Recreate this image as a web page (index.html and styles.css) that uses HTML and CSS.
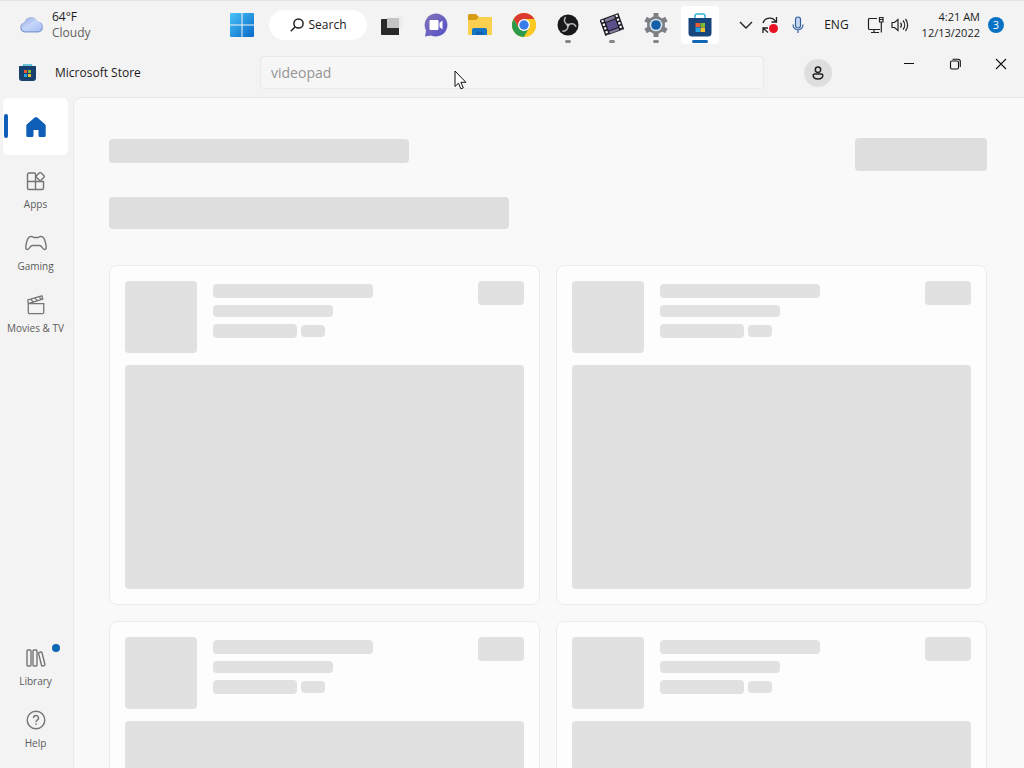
FILE: index.html
```html
<!DOCTYPE html>
<html lang="en">
<head>
<meta charset="utf-8">
<title>Microsoft Store</title>
<link rel="stylesheet" href="styles.css">
</head>
<body>
<header class="taskbar">
  <button class="weather">
    <svg width="26" height="18" viewBox="0 0 26 18"><defs><linearGradient id="cl" x1="0" y1="0" x2="1" y2="1"><stop offset="0" stop-color="#8ea6da"/><stop offset=".5" stop-color="#c6d6fa"/><stop offset="1" stop-color="#a5bcf0"/></linearGradient></defs><path d="M6 16.500a5 5 0 0 1-.6-9.900A7 7 0 0 1 18.600 5.800 5.400 5.400 0 0 1 19.500 16.500z" fill="#7f9ad2"/><path d="M6 15.300a4.600 4.600 0 0 1-.6-8.900A7 7 0 0 1 18.600 5.600 5 5 0 0 1 19.500 15.300z" fill="url(#cl)"/></svg>
    <span class="weather-text"><span>64°F</span><span class="muted">Cloudy</span></span>
  </button>
  <nav class="apps" aria-label="Taskbar">
    <button class="app" aria-label="Start"><svg width="24" height="24" viewBox="0 0 24 24"><defs><linearGradient id="wn" x1="0" y1="0" x2="1" y2="1"><stop offset="0" stop-color="#48c3f8"/><stop offset="1" stop-color="#0868c8"/></linearGradient></defs><path d="M1 0h10.500v11.500H0V1a1 1 0 0 1 1-1zM12.500 0H23a1 1 0 0 1 1 1v10.500H12.500zM0 12.500h11.500V24H1a1 1 0 0 1-1-1zM12.500 12.500H24V23a1 1 0 0 1-1 1H12.500z" fill="url(#wn)"/></svg></button>
    <button class="search"><svg width="14" height="14" viewBox="0 0 14 14" fill="none" stroke="#222" stroke-width="1.500"><circle cx="8.500" cy="5.500" r="4.600"/><path d="M5.200 8.800.8 13.200"/></svg>Search</button>
    <button class="app" aria-label="Task view"><svg width="26" height="22" viewBox="0 0 26 22"><path d="M18 2h6v12h-6z" fill="#ececec"/><path d="M2 6a1 1 0 0 1 1-1h17v16H3a1 1 0 0 1-1-1z" fill="#292929"/><path d="M8 4h12v10H8z" fill="#c3c3c3"/></svg></button>
    <button class="app" aria-label="Chat"><svg width="24" height="24" viewBox="0 0 24 24"><defs><linearGradient id="ch" x1="0" y1="0" x2="1" y2="1"><stop offset="0" stop-color="#8275b8"/><stop offset="1" stop-color="#5550c8"/></linearGradient></defs><path d="M12 .5A11.500 11.500 0 1 1 7 22.400L1 23.500l1-6A11.500 11.500 0 0 1 12 .5z" fill="url(#ch)"/><rect x="5.500" y="7" width="9" height="10" rx="1" fill="#fff"/><path d="m15.500 10 3-2.500v9l-3-2.500z" fill="#fff"/></svg></button>
    <button class="app" aria-label="File Explorer"><svg width="26" height="24" viewBox="0 0 26 24"><path d="M1 2.500A1.500 1.500 0 0 1 2.500 1H9l3 3v5H1z" fill="#d79b16"/><path d="M1 7h8l3-3h12a1 1 0 0 1 1 1v17H2a1 1 0 0 1-1-1z" fill="#fbd04e"/><path d="M5 22v-5a2 2 0 0 1 2-2h11a2 2 0 0 1 2 2v5z" fill="#1674c5"/><path d="M9 19h7v3H9z" fill="#0f62b0"/></svg></button>
    <button class="app" aria-label="Google Chrome"><svg width="24" height="24" viewBox="0 0 24 24"><circle cx="12" cy="12" r="12" fill="#fbc924"/><path d="M1.600 6A12 12 0 0 1 22.400 6H12l-5.200 9z" fill="#dc3a30"/><path d="M1.600 6A12 12 0 0 0 12 24l5.200-9H6.800z" fill="#2d9b4b"/><path d="M12 6h10.400A12 12 0 0 1 12 24l5.200-9z" fill="#fbc924"/><circle cx="12" cy="12" r="6" fill="#fff"/><circle cx="12" cy="12" r="4.700" fill="#397be8"/></svg></button>
    <button class="app running" aria-label="OBS Studio"><svg width="22" height="22" viewBox="0 0 22 22"><circle cx="11" cy="11" r="10.500" fill="#19191b"/><g fill="none" stroke="#b5b5b5" stroke-width="1.500"><path d="M11 11C7 9 6.500 6 8.500 3"/><path d="M11 11C7 9 6.500 6 8.500 3" transform="rotate(120 11 11)"/><path d="M11 11C7 9 6.500 6 8.500 3" transform="rotate(240 11 11)"/></g><circle cx="11" cy="11" r="1.500" fill="#ccc"/></svg></button>
    <button class="app running" aria-label="Video editor"><svg width="24" height="24" viewBox="0 0 24 24"><g transform="rotate(-20 12 12)"><rect x="2" y="3" width="20" height="17" fill="#1c1a24"/><rect x="7" y="4" width="10" height="3" fill="#817a9a"/><rect x="7" y="8" width="10" height="8" fill="#5d518d"/><rect x="7" y="17" width="10" height="2.500" fill="#817a9a"/><path d="M4.500 4v16M19.500 4v16" stroke="#fff" stroke-width="2.200" stroke-dasharray="2.200 1.700"/></g></svg></button>
    <button class="app running" aria-label="Settings"><svg width="24" height="24" viewBox="0 0 24 24"><path d="M12 0v24M1.600 6l20.800 12M1.600 18 22.400 6" stroke="#7c8084" stroke-width="5"/><circle cx="12" cy="12" r="9" fill="#7c8084"/><circle cx="12" cy="12" r="6.300" fill="#d9e5ef"/><circle cx="12" cy="12" r="4.800" fill="#145ea8"/></svg></button>
    <button class="app active" aria-label="Microsoft Store"><svg width="24" height="24" viewBox="0 0 24 24"><path d="M7 6V3a2 2 0 0 1 2-2h6a2 2 0 0 1 2 2v3" fill="none" stroke="#35b5d0" stroke-width="1.500"/><path d="M.5 5h23v15a3.500 3.500 0 0 1-3.500 3.500H4A3.500 3.500 0 0 1 .5 20z" fill="#17457c"/><path d="M7.500 10H12v4H7.500z" fill="#ed5a32"/><path d="M12.500 10H17v4h-4.500z" fill="#7dbb36"/><path d="M7.500 14.500H12v4.500H7.500z" fill="#25a3e4"/><path d="M12.500 14.500H17v4.500h-4.500z" fill="#fac32b"/></svg></button>
  </nav>
  <div class="tray">
    <button aria-label="Show hidden icons"><svg width="14" height="8" viewBox="0 0 14 8" fill="none" stroke="#222" stroke-width="1.400"><path d="m1 1 6 6 6-6"/></svg></button>
    <button aria-label="Updates"><svg width="18" height="18" viewBox="0 0 18 18" fill="none" stroke="#222" stroke-width="1.300"><path d="M2 7a7 7 0 0 1 13-1M15.500 1v5h-5M7 16.500 2.500 12.500M2 17v-5h5"/><circle cx="12.500" cy="12.500" r="4.500" fill="#e81123" stroke="none"/></svg></button>
    <button class="mic" aria-label="Microphone"><svg width="12" height="18" viewBox="0 0 12 18" fill="none" stroke="#335f9d" stroke-width="1.200"><rect x="3.500" y="1" width="5" height="11" rx="2.500" fill="#c5d8ef"/><path d="M1 8.500a5 5.500 0 0 0 10 0M6 14v3"/></svg></button>
    <button class="lang">ENG</button>
    <button class="net" aria-label="Network and volume">
      <svg width="18" height="18" viewBox="0 0 18 18" fill="none" stroke="#222" stroke-width="1.200"><path d="M10 2.500H2.500a1 1 0 0 0-1 1v9a1 1 0 0 0 1 1H13M7 13.500v3M4 16.500h8M12.500 1.500h3.500v4.500h-3.500zM12.500 3.500H16M14.300 6v10.500"/></svg>
      <svg width="18" height="16" viewBox="0 0 18 16" fill="none" stroke="#222" stroke-width="1.200"><path d="M1 5.500h2.500L7 2.500v11l-3.500-3H1zM9.500 5.500a4 4 0 0 1 0 5M12 3.500a7 7 0 0 1 0 9M14.500 2a9.500 9.500 0 0 1 0 12"/></svg>
    </button>
    <button class="clock"><span>4:21 AM</span><span>12/13/2022</span></button>
    <button class="count" aria-label="3 notifications">3</button>
  </div>
</header>

<div class="titlebar">
  <div class="brand">
    <svg width="17" height="17" viewBox="0 0 17 17"><path d="M4.500 3V1h8v2" fill="none" stroke="#43b6d0" stroke-width="1.300"/><path d="M0 2h17v12a3 3 0 0 1-3 3H3a3 3 0 0 1-3-3z" fill="#18406e"/><path d="M5 6h3v3H5z" fill="#ed5a32"/><path d="M9 6h3v3H9z" fill="#7dbb36"/><path d="M5 10h3v3H5z" fill="#25a3e4"/><path d="M9 10h3v3H9z" fill="#fac32b"/></svg>
    <span>Microsoft Store</span>
  </div>
  <input class="store-search" type="text" value="videopad" aria-label="Search apps, games and movies">
  <div class="title-end">
    <button class="account" aria-label="Account"><svg width="12" height="14" viewBox="0 0 12 14" fill="none" stroke="#222" stroke-width="1.500"><circle cx="6" cy="3.700" r="2.700"/><path d="M2.500 8h7a1.300 1.300 0 0 1 1.300 1.300C10.800 12 9 13 6 13s-4.800-1-4.800-3.700A1.300 1.300 0 0 1 2.500 8z"/></svg></button>
    <div class="window-buttons">
      <button aria-label="Minimize"><svg width="12" height="12" viewBox="0 0 12 12" stroke="#111"><path d="M1 5.500h10"/></svg></button>
      <button aria-label="Restore"><svg width="12" height="12" viewBox="0 0 12 12" fill="none" stroke="#111" stroke-width="1.100"><rect x="1.500" y="3" width="8" height="8" rx="1.500"/><path d="M3.500 1.200H9a2.300 2.300 0 0 1 2.300 2.300V9"/></svg></button>
      <button aria-label="Close"><svg width="12" height="12" viewBox="0 0 12 12" stroke="#111" stroke-width="1.100"><path d="m1 1 10 10M11 1 1 11"/></svg></button>
    </div>
  </div>
</div>

<div class="window">
  <nav class="sidebar" aria-label="Store">
    <a class="item selected" href="#home" aria-label="Home"><svg width="20" height="22" viewBox="0 0 20 22"><path d="M8.700 1.500a2 2 0 0 1 2.600 0l7.700 6.700a2 2 0 0 1 .7 1.500V19.500a1.500 1.500 0 0 1-1.500 1.500h-4.200a1.500 1.500 0 0 1-1.500-1.500V14h-5v5.500A1.500 1.500 0 0 1 6 21H1.800A1.500 1.500 0 0 1 .3 19.500V9.700A2 2 0 0 1 1 8.200z" fill="#0f5fb8"/></svg></a>
    <a class="item" href="#apps"><svg width="20" height="20" viewBox="0 0 20 20" class="line"><path d="M9.500 2H3a1.500 1.500 0 0 0-1.500 1.500V17A1.500 1.500 0 0 0 3 18.500h13a1.500 1.500 0 0 0 1.500-1.500v-6.500h-16M9.500 2v16.500"/><rect x="11" y="2.300" width="6.400" height="6.400" rx="1" transform="rotate(45 14.200 5.500)"/></svg><span>Apps</span></a>
    <a class="item" href="#gaming"><svg width="24" height="20" viewBox="0 0 24 20" class="line"><path d="M7.500 3.500C4 3.500 3.500 6 2.300 10.500c-.8 3.500-.8 6 1.200 6 2 0 2.500-4 5-4h7c2.500 0 3 4 5 4s2-2.500 1.200-6C20.500 6 20 3.500 16.500 3.500c-1.500 0-1.500 1-2.500 1h-4c-1 0-1-1-2.500-1z"/></svg><span>Gaming</span></a>
    <a class="item" href="#movies"><svg width="20" height="22" viewBox="0 0 20 22" class="line"><path d="M1.500 9.500h17v9A1.500 1.500 0 0 1 17 20.500H3a1.500 1.500 0 0 1-1.500-1.500zM1.500 9.500 1 5.500 16.500 1l1 3.500zM4.500 5 7 7.800M9 3.500l2.500 3M13.500 2.200 16 5"/></svg><span>Movies &amp; TV</span></a>
    <a class="item lower" href="#library"><svg width="20" height="20" viewBox="0 0 20 20" class="line"><rect x="1" y="2" width="4" height="16" rx="1"/><rect x="7" y="2" width="4" height="16" rx="1"/><rect x="14" y="4" width="3.500" height="14" rx="1" transform="rotate(-14 15.700 11)"/></svg><span>Library</span><i class="dot"></i></a>
    <a class="item" href="#help"><svg width="20" height="20" viewBox="0 0 20 20" class="line"><circle cx="10" cy="10" r="8.800"/><path d="M7.500 8a2.500 2.500 0 1 1 3.700 2.200c-.8.500-1.200.9-1.200 2M10 13.600v1.400"/></svg><span>Help</span></a>
  </nav>
  <main class="content" aria-busy="true">
    <div class="heading"><div class="bone title-bone"></div><div class="bone action-bone"></div></div>
    <div class="bone subtitle-bone"></div>
    <div class="cards">
      <article class="card"><div class="card-head"><div class="bone thumb"></div><div class="lines"><div class="bone l1"></div><div class="bone l2"></div><div class="pair"><div class="bone l3"></div><div class="bone l4"></div></div></div><div class="bone price"></div></div><div class="bone shot"></div></article>
      <article class="card"><div class="card-head"><div class="bone thumb"></div><div class="lines"><div class="bone l1"></div><div class="bone l2"></div><div class="pair"><div class="bone l3"></div><div class="bone l4"></div></div></div><div class="bone price"></div></div><div class="bone shot"></div></article>
      <article class="card"><div class="card-head"><div class="bone thumb"></div><div class="lines"><div class="bone l1"></div><div class="bone l2"></div><div class="pair"><div class="bone l3"></div><div class="bone l4"></div></div></div><div class="bone price"></div></div><div class="bone shot"></div></article>
      <article class="card"><div class="card-head"><div class="bone thumb"></div><div class="lines"><div class="bone l1"></div><div class="bone l2"></div><div class="pair"><div class="bone l3"></div><div class="bone l4"></div></div></div><div class="bone price"></div></div><div class="bone shot"></div></article>
    </div>
  </main>
</div>
<svg class="pointer" width="13" height="20" viewBox="0 0 13 20"><path d="M1 1v15.500l3.500-3.300 2.400 5.600 2.400-1-2.400-5.500h5z" fill="#fff" stroke="#111"/></svg>
</body>
</html>
```
FILE: styles.css
```css
* { box-sizing: border-box; }

body {
  margin: 0;
  height: 100vh;
  display: flex;
  flex-direction: column;
  overflow: hidden;
  background: #f3f3f3;
  color: #1b1b1b;
  font: 12px/16px "Open Sans", "Noto Sans", sans-serif;
}

button {
  border: 0;
  padding: 0;
  background: none;
  color: inherit;
  font: inherit;
}

svg { display: block; flex: none; }

.taskbar {
  flex: none;
  height: 48px;
  display: flex;
  align-items: center;
  border-top: 1px solid #e2e2e2;
}

.weather {
  flex: 0 0 220px;
  display: flex;
  align-items: center;
  gap: 7px;
  padding-left: 19px;
  text-align: left;
}

.weather-text,
.clock { display: flex; flex-direction: column; }
.muted { color: #606060; }

.apps { display: flex; align-items: center; }

.app {
  position: relative;
  width: 44px;
  height: 40px;
  display: grid;
  place-items: center;
}

.search {
  width: 98px;
  height: 30px;
  margin: 0 3px 0 5px;
  display: flex;
  align-items: center;
  justify-content: center;
  gap: 5px;
  border-radius: 15px;
  background: #fff;
}

.running::after,
.active::after {
  content: "";
  position: absolute;
  bottom: 2px;
  left: 50%;
  width: 6px;
  height: 3px;
  margin-left: -3px;
  border-radius: 2px;
  background: #858585;
}

.active {
  width: 38px;
  height: 38px;
  margin: 0 3px;
  border-radius: 4px;
  background: #fff;
}

.active::after {
  bottom: 1px;
  width: 16px;
  margin-left: -8px;
  background: #1068b5;
}

.tray {
  margin-left: auto;
  padding-right: 20px;
  display: flex;
  align-items: center;
}

.tray button { margin-left: 8px; }
.tray .mic { margin-left: 13px; }
.tray .lang { margin: 0 18px 0 20px; }
.net { display: flex; align-items: center; gap: 6px; }
.tray .net { margin-left: 0; }
.tray .clock { margin-left: 13px; text-align: right; font-size: 11px; }

.tray .count {
  width: 16px;
  height: 16px;
  border-radius: 50%;
  background: #0873c4;
  color: #fff;
  font-size: 11px;
}

.titlebar {
  flex: none;
  height: 49px;
  display: grid;
  grid-template-columns: 1fr minmax(0, 504px) 1fr;
  align-items: center;
}

.brand {
  display: flex;
  align-items: center;
  gap: 19px;
  padding-left: 19px;
}

.store-search {
  width: 100%;
  height: 33px;
  padding: 0 10px;
  border: 1px solid #e9e9e9;
  border-radius: 4px;
  background: #f6f6f6;
  color: #949494;
  font: 14px/18px "Open Sans", "Noto Sans", sans-serif;
}

.title-end {
  align-self: stretch;
  display: flex;
  align-items: center;
  justify-content: space-between;
  padding-left: 40px;
}

.account {
  width: 28px;
  height: 28px;
  display: grid;
  place-items: center;
  border-radius: 50%;
  background: #dedede;
}

.window-buttons { align-self: flex-start; display: flex; }

.window-buttons button {
  width: 46px;
  height: 32px;
  display: grid;
  place-items: center;
}

.window {
  flex: 1;
  min-height: 0;
  display: flex;
}

.sidebar {
  flex: 0 0 73px;
  display: flex;
  flex-direction: column;
  gap: 5px;
  padding: 1px 5px 12px 3px;
}

.item {
  position: relative;
  height: 57px;
  display: flex;
  flex-direction: column;
  align-items: center;
  padding-top: 11px;
  gap: 5px;
  color: #5b5b5b;
  font-size: 10px;
  line-height: 16px;
  text-decoration: none;
  white-space: nowrap;
}

.item svg { height: 20px; }
.line { fill: none; stroke: #757575; stroke-width: 1.4; }

.selected {
  justify-content: center;
  padding: 0;
  border-radius: 5px;
  background: #fff;
}

.item.selected svg { height: 22px; }

.selected::before {
  content: "";
  position: absolute;
  left: 1px;
  top: 16px;
  width: 4px;
  height: 24px;
  border-radius: 2px;
  background: #0f5fb8;
}

.lower { margin-top: auto; }

.dot {
  position: absolute;
  top: 7px;
  right: 8px;
  width: 8px;
  height: 8px;
  border-radius: 50%;
  background: #0f66b4;
}

.content {
  flex: 1;
  min-width: 0;
  overflow: hidden;
  padding: 40px 37px 0 35px;
  border-top: 1px solid #e6e6e6;
  border-left: 1px solid #ebebeb;
  border-top-left-radius: 8px;
  background: #f9f9f9;
}

.bone { border-radius: 4px; background: #e1e1e1; }

.heading {
  display: flex;
  align-items: flex-start;
  justify-content: space-between;
}

.title-bone { width: 300px; height: 24px; margin-top: 1px; background: #dedede; }
.action-bone { width: 132px; height: 33px; background: #dedede; }
.subtitle-bone { width: 400px; max-width: 100%; height: 32px; margin: 26px 0 36px; background: #dedede; }

.cards {
  display: grid;
  grid-template-columns: 1fr 1fr;
  gap: 16px;
}

.card {
  padding: 15px;
  border: 1px solid #ececec;
  border-radius: 8px;
  background: #fdfdfd;
}

.card-head { display: flex; gap: 16px; margin-bottom: 12px; }
.thumb { width: 72px; height: 72px; }
.lines { flex: 1; padding-top: 3px; }
.l1 { width: 160px; height: 14px; }
.l2 { width: 120px; height: 12px; margin: 7px 0; }
.pair { display: flex; align-items: center; gap: 4px; }
.l3 { width: 84px; height: 14px; }
.l4 { width: 24px; height: 12px; }
.price { width: 46px; height: 24px; }
.shot { height: 224px; }

.pointer { position: absolute; left: 454px; top: 70px; }
```
